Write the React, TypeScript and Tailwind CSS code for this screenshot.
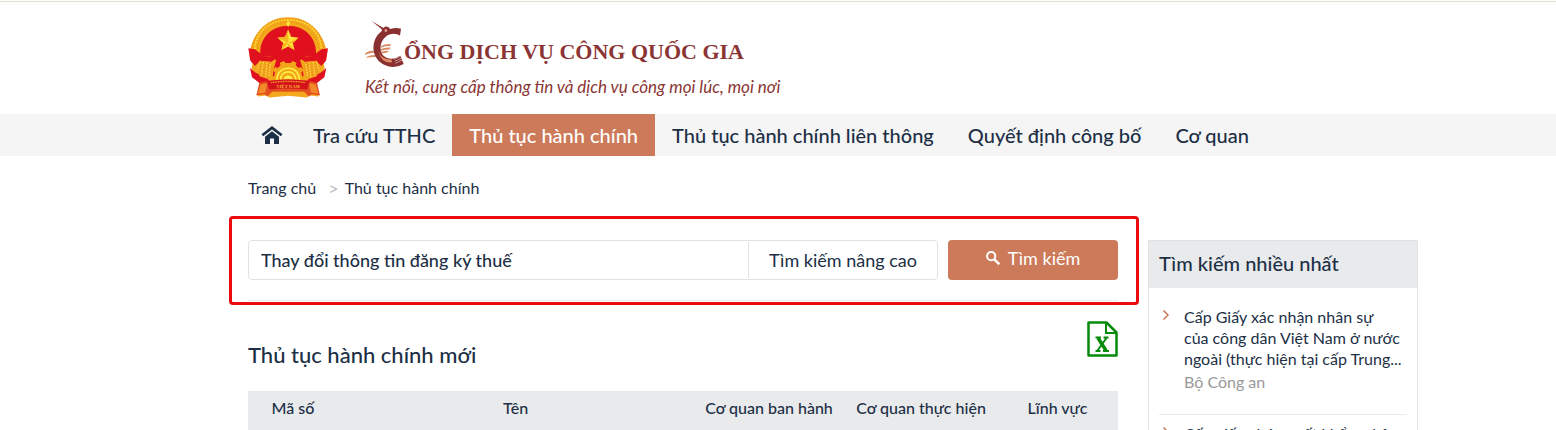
const NAV_ITEMS = [
  { label: "Tra cứu TTHC", active: false },
  { label: "Thủ tục hành chính", active: true },
  { label: "Thủ tục hành chính liên thông", active: false },
  { label: "Quyết định công bố", active: false },
  { label: "Cơ quan", active: false },
];

const POPULAR = [
  {
    lines: ["Cấp Giấy xác nhận nhân sự", "của công dân Việt Nam ở nước", "ngoài (thực hiện tại cấp Trung..."],
    agency: "Bộ Công an",
  },
  {
    lines: ["Cấp giấy phép xuất khẩu, nhập"],
    agency: "Bộ Công an",
  },
];

const COLUMNS = [
  { label: "Mã số", className: "w-[90px]" },
  { label: "Tên", className: "" },
  { label: "Cơ quan ban hành", className: "w-[152px]" },
  { label: "Cơ quan thực hiện", className: "w-[152px]" },
  { label: "Lĩnh vực", className: "w-[121px]" },
];

function Emblem() {
  return (
    <svg viewBox="26 24 244 246" className="h-[82px] w-[81px] shrink-0" role="img" aria-label="Quốc huy Việt Nam">
      {/* Wreath of rice ears */}
      <path
        d="M147 27c-35 0-64 14-84 37-18 20-27 42-30 60l-4 4 3 26 8 12-3 14 7 23 20 16-8 47 24-3 12 6 55-5 55 5 12-6 24 3-8-47 20-16 7-23-3-14 8-12 3-26-4-4c-3-18-12-40-30-60-20-23-49-37-84-37z"
        fill="#f4a81c"
      />
      {/* Red field */}
      <path
        d="M147 53c-50 0-84 36-84 80l-2 14 30-4 20 14-8 26-4 36h96l-4-36-8-26 20-14 30 4-2-14c0-44-34-80-84-80z"
        fill="#e0101f"
      />
      <path
        d="M46 132c0-58 42-97 101-97s101 39 101 97"
        fill="none"
        stroke="#ffdc3c"
        strokeWidth="5"
        strokeDasharray="5 4"
      />
      <path
        d="M39 128c2-58 46-97 108-97s106 39 108 97M54 132c0-52 40-90 93-90s93 38 93 90"
        fill="none"
        stroke="#d97a0f"
        strokeWidth="2"
        strokeDasharray="3 5"
      />
      {/* Ribbons crossing the wreath */}
      <path d="M27 121l20 3 26 20 44 2-20 15-34-3-16 16-14-16zM267 121l-20 3-26 20-44 2 20 15 34-3 16 16 14-16z" fill="#e0101f" />
      <path d="M32 180l16 14 34 16 20 20-38-2-26-20zM262 180l-16 14-34 16-20 20 38-2 26-20z" fill="#e0101f" />
      <path d="M60 158l34 4 8 18-14 34-26-8-12-22zM234 158l-34 4-8 18 14 34 26-8 12-22z" fill="#f09c1c" />
      <path
        d="M62 162l-8 26M72 162l-6 42M83 164l-4 44M94 168l-6 40M232 162l8 26M222 162l6 42M211 164l4 44M200 168l6 40"
        fill="none"
        stroke="#ffdc3c"
        strokeWidth="4"
        strokeDasharray="5 3"
      />
      {/* Star */}
      <path d="M147 64l9 22 22 3-17 16 5 21-19-11-20 11 5-21-17-16 23-3z" fill="#ffe23b" />
      <path d="M147 64v41l-9-19zM178 89l-31 16 14 0zM166 126l-19-21v10zM127 126l20-21-15 0zM115 89l32 16-9-19z" fill="#f6b81e" />
      {/* Cogwheel */}
      <path d="M99 218l-2-12 8-2 2-11-7-6 8-10 8 3 8-8-2-8 12-5 5 6h16l5-6 12 5-2 8 8 8 8-3 8 10-7 6 2 11 8 2-2 12z" fill="#f3a51a" />
      <path
        d="M113 218c0-24 15-37 34-37s34 13 34 37M124 218c0-17 10-26 23-26s23 9 23 26"
        fill="none"
        stroke="#ffee45"
        strokeWidth="5"
      />
      <path d="M133 218c0-10 6-15 14-15s14 5 14 15z" fill="#ffee45" />
      {/* Banner */}
      <path d="M51 263l9-38 34-8 53-3 53 3 34 8 9 38-24-4-10 7-14-14H99l-14 14-10-7z" fill="#e5501f" />
      <path d="M56 258l8-28 20-4-6 28zM238 258l-8-28-20-4 6 28z" fill="#f28a2a" />
      <path d="M82 220q65-10 130 0l-8 26q-57-8-114 0z" fill="#d5131d" />
      <path d="M96 224q51-7 102 0" fill="none" stroke="#f8a52b" strokeWidth="4" strokeDasharray="3 2" />
      <text x="147" y="239" textAnchor="middle" fontSize="14" fontWeight="700" fontFamily="Liberation Serif, serif" fill="#fbb42e">
        VIỆT NAM
      </text>
      <path d="M147 36l6 11-6 10-6-10z" fill="#ffe83b" />
    </svg>
  );
}

function BirdMark() {
  return (
    <svg viewBox="32 30 118 140" className="h-[47px] w-[39px] shrink-0" aria-hidden="true">
      <path d="M32 131q9-10 24-9l5 5q-14 1-28 7zM36 141q10-6 26-6l3 6q-14-1-28 2z" fill="#d98a63" />
      <path d="M78 109q14-8 32-7l-2 6q-16-1-29 5zM79 117q14-6 31-5l-4 6q-14 0-26 4zM81 125q12-4 23-3l-6 6-16 2z" fill="#d98a63" />
      <path
        d="M52 32l36 21q5-6 12-4 6 2 8 7 18-6 33-1l-3 21q-14-9-30-4l-9 4q-18 14-20 32-2 26 18 35 15 6 28 1l14-8 10 26q-24 14-50 6-32-11-40-41-6-29 11-53l14-13-3-6z"
        fill="#8a3031"
      />
      <path d="M72 122q9 28 40 26l2 9q-33 4-42-35z" fill="#df8a64" />
      <circle cx="95" cy="61" r="4" fill="#e9a98c" />
      <path d="M117 142l26-13M120 148l26-13M122 154l26-12M124 160l24-12" stroke="#fff" strokeWidth="1.500" />
    </svg>
  );
}

function HomeIcon() {
  return (
    <svg viewBox="0 0 22 20" className="h-5 w-[22px]" fill="#1c2f45" aria-hidden="true">
      <path d="M11 1l10.500 8.300-1.700 2L11 4.400l-8.800 6.900-1.700-2z" />
      <path d="M11 6.200l7 5.500V19h-5v-5.500H9V19H4v-7.300z" />
    </svg>
  );
}

function SearchIcon() {
  return (
    <svg viewBox="0 0 14 14" className="size-[14px]" fill="none" stroke="currentColor" aria-hidden="true">
      <circle cx="5.200" cy="5.200" r="4.100" strokeWidth="2" />
      <path d="M8.300 8.300l5 5" strokeWidth="2.400" />
    </svg>
  );
}

function ExcelIcon() {
  return (
    <svg viewBox="0 0 32 36" className="h-9 w-8" fill="none" stroke="#068a0c" aria-hidden="true">
      <path d="M2.500 1.500h18l10 10v23h-28z" strokeWidth="2.500" strokeLinejoin="round" />
      <path d="M20 2v10h10" strokeWidth="2" />
      <path d="M12 17l8 12.500" strokeWidth="3.500" />
      <path d="M20.500 17l-9 12.500" strokeWidth="2" />
      <path d="M9.500 16.500h5.500M17.500 16.500h5M9.500 30h5M17 30h6" strokeWidth="2" />
    </svg>
  );
}

function Chevron() {
  return (
    <svg viewBox="0 0 8 12" className="mt-[3px] h-3 w-2 shrink-0" fill="none" stroke="#c97a58" strokeWidth="1.500" aria-hidden="true">
      <path d="M1.500 1.500L6 6l-4.500 4.500" />
    </svg>
  );
}

function Header() {
  return (
    <header className="border-t border-white">
      <div className="flex h-[113px] border-t border-[#dfe3cf] pr-[138px] pl-[248px]">
        <a href="#" className="flex pt-[14px]">
          <Emblem />
          <div className="ml-9 pt-1 text-[#8a3534]">
            <div className="flex h-[47px]">
              <BirdMark />
              <span className="pt-[18px] font-['Liberation_Serif',serif] text-[22px] leading-7 font-bold whitespace-nowrap">
                ỔNG DỊCH VỤ CÔNG QUỐC GIA
              </span>
            </div>
            <p className="mt-2 text-[17px] leading-6 whitespace-nowrap italic">
              Kết nối, cung cấp thông tin và dịch vụ công mọi lúc, mọi nơi
            </p>
          </div>
        </a>
      </div>
      <nav className="flex h-[42px] bg-[#f5f5f5] pr-[138px] pl-[248px] text-[20px] font-medium whitespace-nowrap">
        <a href="#" aria-label="Trang chủ" className="flex items-center px-[13px]">
          <HomeIcon />
        </a>
        {NAV_ITEMS.map((item) => (
          <a
            key={item.label}
            href="#"
            className={`flex items-center px-[17px] ${item.active ? "bg-[#cc7a59] text-white" : ""}`}
          >
            {item.label}
          </a>
        ))}
      </nav>
    </header>
  );
}

function SearchForm() {
  return (
    <form className="relative flex gap-[10px]" onSubmit={(e) => e.preventDefault()}>
      <div className="flex h-10 flex-1 rounded border border-[#dfe1e3]">
        <input
          type="text"
          aria-label="Từ khóa"
          defaultValue="Thay đổi thông tin đăng ký thuế"
          className="min-w-0 flex-1 px-3 text-[18px] font-medium outline-none"
        />
        <button type="button" className="my-px w-[189px] border-l border-[#dfe1e3] text-[18px]">
          Tìm kiếm nâng cao
        </button>
      </div>
      <button
        type="submit"
        className="flex h-10 w-[170px] items-center justify-center gap-2 rounded bg-[#cc7a59] pb-1 text-[18px] text-white"
      >
        <SearchIcon />
        Tìm kiếm
      </button>
      {/* Highlight frame around the search bar */}
      <div className="pointer-events-none absolute -top-6 -right-[21px] -bottom-[25px] -left-[19px] rounded-sm border-3 border-[#ea0c0e]" />
    </form>
  );
}

function Sidebar() {
  return (
    <aside className="w-[270px] shrink-0 border border-[#dfe1e3]">
      <h2 className="flex h-[47px] items-center bg-[#e8eaec] px-[10px] pb-1 text-[20px] font-medium">Tìm kiếm nhiều nhất</h2>
      <ul className="px-[10px] pt-[18px]">
        {POPULAR.map((item) => (
          <li key={item.lines[0]} className="mb-2 flex gap-[14px] border-b border-[#ebebeb] pb-[22px] pl-[3px] text-[16px]">
            <Chevron />
            <div className="whitespace-nowrap">
              <a href="#" className="block leading-[21px]">
                {item.lines.map((line) => (
                  <span key={line} className="block">
                    {line}
                  </span>
                ))}
              </a>
              <p className="mt-[2px] leading-[21px] text-[#999]">{item.agency}</p>
            </div>
          </li>
        ))}
      </ul>
    </aside>
  );
}

export default function App() {
  return (
    <div className="h-screen overflow-hidden bg-white font-[Lato,'Noto_Sans',sans-serif] text-[#1c2f45]">
      <Header />
      <main className="pr-[138px] pl-[248px]">
        <nav aria-label="Breadcrumb" className="flex h-[84px] pt-5 text-[16px] leading-6">
          <a href="#">Trang chủ</a>
          <span className="mr-[6px] ml-3 text-[18px] text-[#bbb]">&gt;</span>
          <a href="#">Thủ tục hành chính</a>
        </nav>
        <div className="flex items-start gap-[30px]">
          <section className="min-w-0 flex-1">
            <SearchForm />
            <div className="mt-5 flex justify-between border-t border-[#ebebeb] pt-5">
              <h1 className="pt-[19px] text-[22px] leading-[30px] font-medium">Thủ tục hành chính mới</h1>
              <button type="button" aria-label="Xuất Excel" className="h-9">
                <ExcelIcon />
              </button>
            </div>
            <table className="mt-[21px] w-full table-fixed bg-[#e8eaec] text-[16px] whitespace-nowrap">
              <thead>
                <tr>
                  {COLUMNS.map((col) => (
                    <th key={col.label} className={`h-[54px] pt-[5px] align-top font-medium ${col.className}`}>
                      {col.label}
                    </th>
                  ))}
                </tr>
              </thead>
            </table>
          </section>
          <Sidebar />
        </div>
      </main>
    </div>
  );
}
